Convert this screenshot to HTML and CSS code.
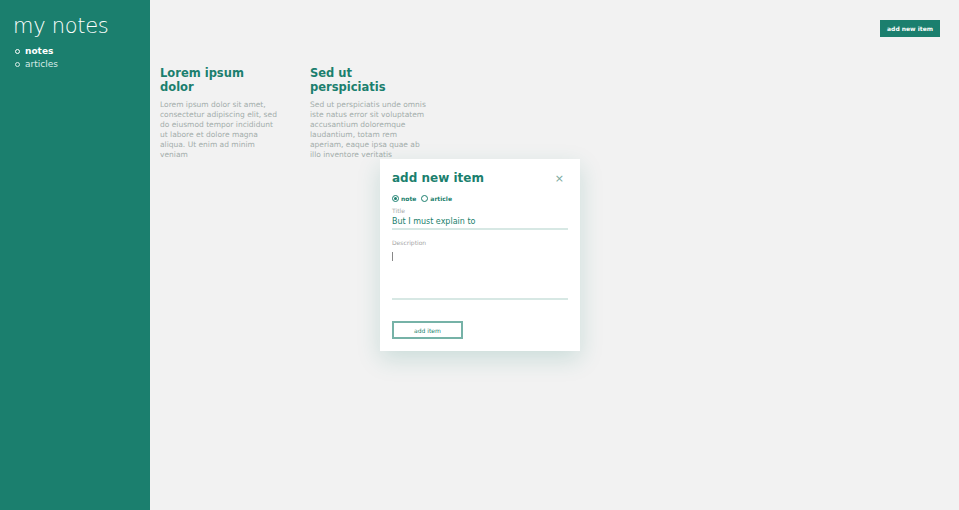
FILE: index.html
```html
<!DOCTYPE html>
<html lang="en">
<head>
    <meta charset="UTF-8">
    <meta name="viewport" content="width=device-width, initial-scale=1.0">
    <title>my notes</title>
    <link rel="stylesheet" href="styles.css">
</head>
<body>
    <aside class="sidebar">
        <h1>my notes</h1>
        <ul class="nav">
            <li class="active">notes</li>
            <li>articles</li>
        </ul>
    </aside>
    <main class="main">
        <div class="toolbar">
            <button class="btn-add">add new item</button>
        </div>
        <div class="cards">
            <div class="card">
                <h2>Lorem ipsum dolor</h2>
                <p>Lorem ipsum dolor sit amet, consectetur adipiscing elit, sed do eiusmod tempor incididunt ut labore et dolore magna aliqua. Ut enim ad minim veniam</p>
            </div>
            <div class="card">
                <h2>Sed ut perspiciatis</h2>
                <p>Sed ut perspiciatis unde omnis iste natus error sit voluptatem accusantium doloremque laudantium, totam rem aperiam, eaque ipsa quae ab illo inventore veritatis</p>
            </div>
        </div>
        <div class="modal">
            <div class="modal-head">
                <h3>add new item</h3>
                <span class="close">&#215;</span>
            </div>
            <div class="types">
                <label><span class="radio checked"></span>note</label>
                <label><span class="radio"></span>article</label>
            </div>
            <div class="field">
                <span class="label">Title</span>
                <div class="input">But I must explain to</div>
            </div>
            <div class="field">
                <span class="label">Description</span>
                <div class="textarea"><span class="caret"></span></div>
            </div>
            <button class="btn-submit">add item</button>
        </div>
    </main>
</body>
</html>
```

FILE: styles.css
```css
body {
    margin: 0;
    height: 510px;
    display: flex;
    font-family: 'DejaVu Sans', sans-serif;
    background-color: #f2f2f2;
    overflow: hidden;
}
.sidebar {
    width: 150px;
    flex-shrink: 0;
    background-color: #1b7f6e;
    color: #fff;
    padding: 13px 0 0 13px;
    box-sizing: border-box;
}
.sidebar h1 {
    margin: 0;
    font-size: 21px;
    font-weight: 300;
    line-height: 27px;
    letter-spacing: -0.3px;
}
.nav {
    list-style: none;
    margin: 5px 0 0;
    padding: 0;
}
.nav li {
    display: flex;
    align-items: center;
    gap: 5px;
    padding-left: 2px;
    font-size: 9px;
    line-height: 13px;
    color: #d7ebe7;
}
.nav li::before {
    content: '';
    width: 3px;
    height: 3px;
    border: 1px solid currentColor;
    border-radius: 50%;
}
.nav li.active {
    color: #fff;
    font-weight: bold;
}
.main {
    flex: 1;
    position: relative;
    padding: 20px 19px 0 10px;
}
.toolbar {
    display: flex;
    justify-content: flex-end;
}
.btn-add {
    background-color: #1b7f6e;
    color: #fff;
    border: none;
    font-family: inherit;
    font-size: 6px;
    font-weight: bold;
    padding: 0 7px;
    height: 17px;
    cursor: pointer;
}
.cards {
    display: flex;
    margin-top: 29px;
}
.card {
    width: 150px;
}
.card h2 {
    margin: 0;
    width: 100px;
    font-size: 11.5px;
    line-height: 14px;
    color: #1b7f6e;
}
.card p {
    margin: 6px 0 0;
    width: 121px;
    font-size: 7.5px;
    line-height: 10px;
    color: #a3adab;
}
.modal {
    position: absolute;
    left: 230px;
    top: 159px;
    width: 200px;
    height: 192px;
    box-sizing: border-box;
    background: #fff;
    padding: 12px 12px 0;
    box-shadow: 0 8px 22px rgba(27, 127, 110, 0.18);
}
.modal-head {
    display: flex;
    justify-content: space-between;
    align-items: center;
}
.modal h3 {
    margin: 0;
    font-size: 12px;
    line-height: 14px;
    color: #1b7f6e;
}
.close {
    color: #7aa9a0;
    font-size: 11px;
    margin-right: 4px;
}
.types {
    display: flex;
    gap: 5px;
    margin-top: 10px;
}
.types label {
    display: flex;
    align-items: center;
    gap: 2px;
    font-size: 6px;
    font-weight: bold;
    color: #1b7f6e;
}
.radio {
    width: 5px;
    height: 5px;
    border: 1px solid #1b7f6e;
    border-radius: 50%;
    position: relative;
}
.radio.checked::after {
    content: '';
    position: absolute;
    left: 1px;
    top: 1px;
    width: 3px;
    height: 3px;
    border-radius: 50%;
    background: #1b7f6e;
}
.field {
    margin-top: 5px;
}
.label {
    display: block;
    font-size: 6px;
    line-height: 7px;
    color: #a6a6a6;
}
.input {
    font-size: 8px;
    line-height: 10px;
    color: #1b7f6e;
    padding: 3px 0 1px;
    border-bottom: 2px solid #d7e8e4;
}
.field + .field {
    margin-top: 9px;
}
.textarea {
    height: 54px;
    padding-top: 6px;
    box-sizing: border-box;
    border-bottom: 2px solid #d7e8e4;
}
.caret {
    display: block;
    width: 1px;
    height: 9px;
    background: #888;
}
.btn-submit {
    display: block;
    margin-top: 21px;
    width: 71px;
    height: 18px;
    background: #fff;
    border: 2px solid #76b2a7;
    color: #1b7f6e;
    font-family: inherit;
    font-size: 6px;
    cursor: pointer;
}
```
